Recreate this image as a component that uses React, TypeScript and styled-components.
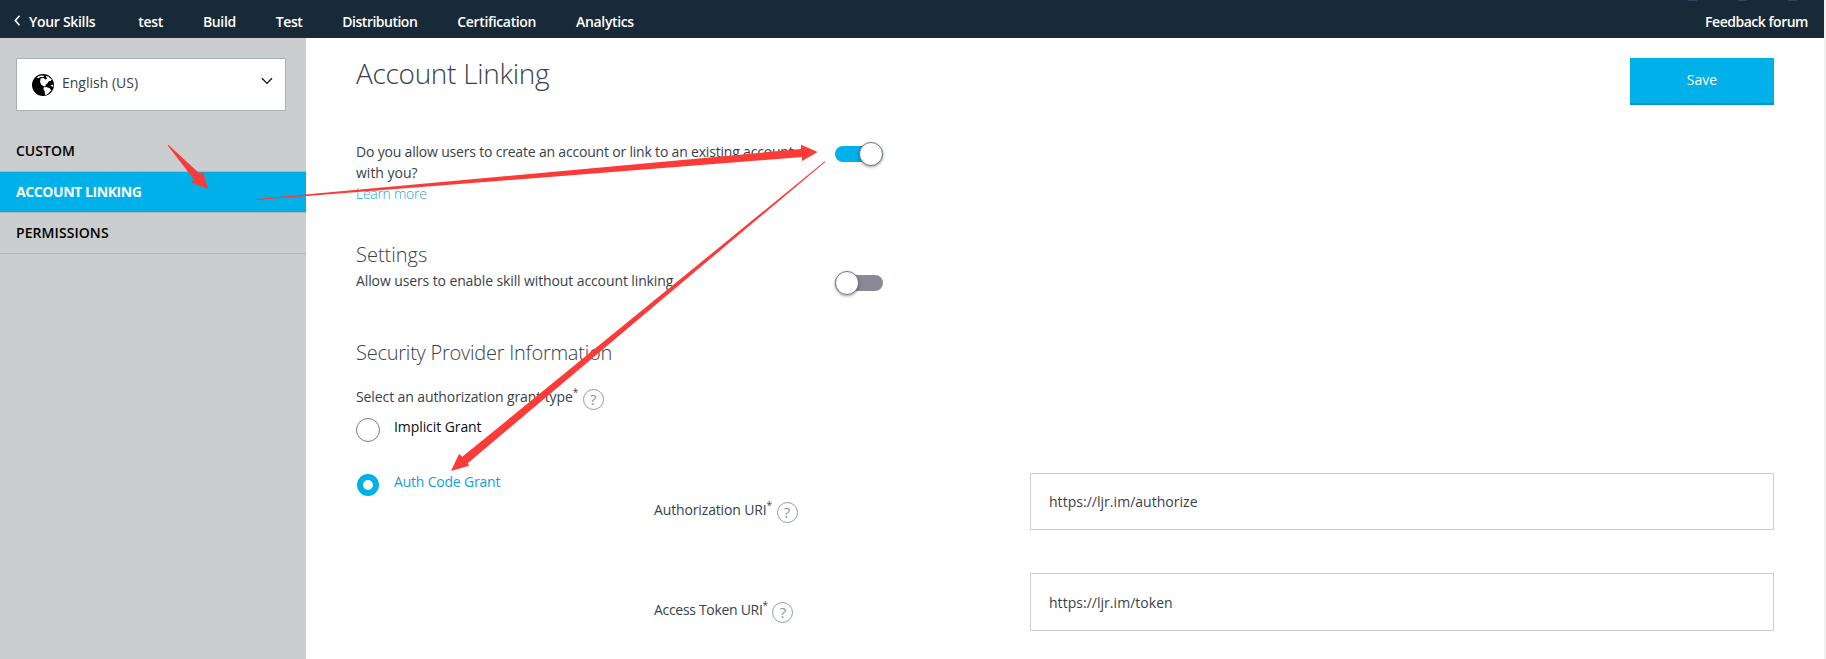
import React from 'react';
import styled, { createGlobalStyle, css } from 'styled-components';

const GlobalStyle = createGlobalStyle`
  * { box-sizing: border-box; }
  body {
    margin: 0;
    overflow: hidden;
    font-family: 'Open Sans', 'Noto Sans', sans-serif;
    font-size: 14px;
    line-height: 21px;
    color: #37424a;
    background: #fff;
  }
`;

const blue = '#00b0e8';

type Spaced = { $track?: number };
const tracking = css<Spaced>`
  letter-spacing: ${({ $track = 0 }) => $track}px;
  white-space: nowrap;
`;

const Page = styled.div`
  position: relative;
  display: flex;
  flex-direction: column;
  height: 659px;
  border-right: 2px solid #f0f0f0;
`;

const TopBar = styled.header`
  position: relative;
  display: flex;
  flex: none;
  align-items: center;
  gap: 40px;
  height: 38px;
  padding: 4px 16px 0 14px;
  background: #182a38;
  color: #fff;
  font-weight: 600;
`;

const BackLink = styled.a`
  display: flex;
  align-items: center;
  gap: 8px;
  margin-right: 3px;
`;

const BackChevron = styled.svg`
  width: 7px;
  height: 11px;
  margin-bottom: 1px;
`;

const NavLink = styled.a<Spaced & { $end?: boolean }>`
  ${tracking}
  margin-left: ${({ $end }) => ($end ? 'auto' : '0')};
`;

const HeaderDots = styled.svg`
  position: absolute;
  top: 0;
  right: 26px;
  width: 112px;
  height: 2px;
`;

const Body = styled.div`
  display: flex;
  flex: 1;
  min-height: 0;
`;

const Sidebar = styled.aside`
  flex: none;
  width: 306px;
  padding-top: 20px;
  background: #cacece;
`;

const LanguageSelect = styled.div`
  display: flex;
  align-items: center;
  width: 270px;
  height: 53px;
  margin: 0 0 20px 16px;
  padding: 0 12px 0 15px;
  background: #fff;
  border: 1px solid #a5b3b3;
`;

const Globe = styled.svg`
  width: 22px;
  height: 22px;
  margin-right: 8px;
`;

const LanguageName = styled.span<Spaced>`
  ${tracking}
  flex: 1;
  padding-bottom: 4px;
`;

const DownChevron = styled.svg`
  width: 12px;
  height: 8px;
  margin-bottom: 8px;
`;

const SideItem = styled.a<Spaced & { $active?: boolean }>`
  ${tracking}
  display: flex;
  align-items: center;
  height: 41px;
  padding: 0 0 1px 16px;
  border-bottom: 1px solid #b0b6b8;
  font-weight: ${({ $active }) => ($active ? 700 : 600)};
  color: ${({ $active }) => ($active ? '#fff' : '#000')};
  background: ${({ $active }) => ($active ? blue : 'transparent')};
`;

const Main = styled.main`
  flex: 1;
  padding: 15px 50px 0;
`;

const TitleRow = styled.div`
  display: flex;
  justify-content: space-between;
  margin-bottom: 36px;
`;

const Title = styled.h1<Spaced>`
  ${tracking}
  margin: 0;
  font-size: 28px;
  line-height: 40px;
  font-weight: 300;
`;

const SaveButton = styled.button`
  width: 144px;
  height: 47px;
  margin-top: 5px;
  padding: 0 0 2px;
  border: 0;
  border-bottom: 2px solid #0097c6;
  background: ${blue};
  color: #fff;
  font: inherit;
`;

const SettingRow = styled.div<{ $after: number }>`
  display: grid;
  grid-template-columns: 479px auto;
  justify-content: start;
  margin-bottom: ${({ $after }) => $after}px;
`;

const Line = styled.div<Spaced>`
  ${tracking}
`;

const LearnMore = styled.a<Spaced>`
  ${tracking}
  display: block;
  font-weight: 300;
  color: #2ea3dc;
`;

const Switch = styled.span<{ $on?: boolean }>`
  display: flex;
  align-items: center;
  justify-content: ${({ $on }) => ($on ? 'flex-end' : 'flex-start')};
  width: 48px;
  height: 16px;
  margin: 5px 0 4px;
  border-radius: 8px;
  background: ${({ $on }) => ($on ? blue : '#8b8998')};
`;

const Knob = styled.span`
  flex: none;
  width: 24px;
  height: 24px;
  border: 1px solid #77768a;
  border-radius: 50%;
  background: #fff;
  box-shadow: 0 1px 3px rgba(0, 0, 0, 0.4);
`;

const Heading = styled.h2<Spaced & { $after: number }>`
  ${tracking}
  margin: 0 0 ${({ $after }) => $after}px;
  font-size: 20px;
  line-height: 28px;
  font-weight: 300;
`;

const LabelRow = styled.div<Spaced>`
  ${tracking}
  display: flex;
  align-items: flex-start;
`;

const Star = styled.sup`
  width: 5px;
  font-size: 10px;
  line-height: 12px;
  letter-spacing: 0;
`;

const HelpBadge = styled.span`
  display: flex;
  align-items: center;
  justify-content: center;
  width: 21px;
  height: 21px;
  margin: 3px 0 0 5px;
  border: 1px solid #8f9c9c;
  border-radius: 50%;
  color: #8a9898;
  font-size: 15px;
  letter-spacing: 0;
`;

const RadioRow = styled.label<{ $checked?: boolean }>`
  display: flex;
  gap: 14px;
  color: ${({ $checked }) => ($checked ? '#109fd9' : '#0c0c18')};
`;

const Radio = styled.span<{ $checked?: boolean }>`
  width: ${({ $checked }) => ($checked ? 22 : 24)}px;
  height: ${({ $checked }) => ($checked ? 22 : 24)}px;
  margin: ${({ $checked }) => ($checked ? '3px 1px 0' : '2px 0 0')};
  border: ${({ $checked }) => ($checked ? `6px solid ${blue}` : '1px solid #7b7a88')};
  border-radius: 50%;
  background: #fff;
`;

const GrantOptions = styled.div`
  display: grid;
  row-gap: 29px;
  padding-top: 6px;
`;

const GrantDetail = styled.div`
  display: grid;
  grid-template-columns: 297px 1fr;
`;

const Fields = styled.div`
  display: flex;
  flex-direction: column;
  gap: 43px;
  padding-top: 2px;
`;

const FieldRow = styled.div`
  display: grid;
  grid-template-columns: 377px 1fr;
`;

const FieldLabel = styled(LabelRow)`
  padding: 26px 0 0 1px;
`;

const FieldBox = styled.div<Spaced & { $height: number }>`
  ${tracking}
  display: flex;
  align-items: center;
  height: ${({ $height }) => $height}px;
  padding-left: 18px;
  border: 1px solid #cecfd6;
  background: #fff;
`;

const Arrows = styled.svg`
  position: absolute;
  inset: 0;
  width: 1826px;
  height: 659px;
  pointer-events: none;
`;

const fields = [
  { label: 'Authorization URI', track: -0.14, value: 'https://ljr.im/authorize', height: 57 },
  { label: 'Access Token URI', track: -0.31, value: 'https://ljr.im/token', height: 58 },
];

export default function App() {
  return (
    <Page>
      <GlobalStyle />
      <TopBar>
        <BackLink>
          <BackChevron viewBox="0 0 7 11">
            <path d="M5.5 0.8 1.3 5.5l4.2 4.7" fill="none" stroke="#fff" strokeWidth="1.6" />
          </BackChevron>
          <NavLink $track={-0.3}>Your Skills</NavLink>
        </BackLink>
        <NavLink $track={-0.35}>test</NavLink>
        <NavLink $track={-0.35}>Build</NavLink>
        <NavLink $track={-0.45}>Test</NavLink>
        <NavLink $track={-0.5}>Distribution</NavLink>
        <NavLink $track={-0.35}>Certification</NavLink>
        <NavLink $track={-0.35}>Analytics</NavLink>
        <NavLink $track={-0.48} $end>Feedback forum</NavLink>
        <HeaderDots viewBox="0 0 112 2">
          <path d="M2 0h9M52 0h9M102 0h9" stroke="#38506e" strokeWidth="1.6" />
        </HeaderDots>
      </TopBar>
      <Body>
        <Sidebar>
          <LanguageSelect>
            <Globe viewBox="0 0 22 22">
              <circle cx="11" cy="11" r="11" fill="#000" />
              <path
                d="M4.5 3.2 8.5 1.5l4 .3-1.4 1.4-2.6-.3-2.2 1.3z"
                fill="#fff"
              />
              <path
                d="M8.2 4.4l3.4-.4 1.8 1.6 1.6-1.2-1.4-2.4 2.8.4 3.4 3.1-1 1.6-2 .2-1.7 2.5-1.6 1 .3 1.2-1.7.5-2.6-1.5-1.5-3 .5-2.4z"
                fill="#fff"
              />
              <path
                d="M11.8 13.2l2.6-.3 3.3 1.3 1.6 2-1.3 1.6-1.9 2-1.9 1.2-1.3-.4-.2-3.4-1.3-2z"
                fill="#fff"
              />
              <path d="M18.4 11.4l2.8-1v2.6z" fill="#fff" />
            </Globe>
            <LanguageName>English (US)</LanguageName>
            <DownChevron viewBox="0 0 12 8">
              <path d="M1 1.2 6 6.4l5-5.2" fill="none" stroke="#111" strokeWidth="1.3" />
            </DownChevron>
          </LanguageSelect>
          <SideItem>CUSTOM</SideItem>
          <SideItem $active $track={-0.42}>ACCOUNT LINKING</SideItem>
          <SideItem $track={0.07}>PERMISSIONS</SideItem>
        </Sidebar>
        <Main>
          <TitleRow>
            <Title $track={-0.3}>Account Linking</Title>
            <SaveButton>Save</SaveButton>
          </TitleRow>
          <SettingRow $after={37}>
            <div>
              <Line $track={-0.19}>Do you allow users to create an account or link to an existing account</Line>
              <Line>with you?</Line>
              <LearnMore $track={-0.28}>Learn more</LearnMore>
            </div>
            <Switch $on>
              <Knob />
            </Switch>
          </SettingRow>
          <Heading $after={1}>Settings</Heading>
          <SettingRow $after={44}>
            <Line $track={-0.11}>Allow users to enable skill without account linking</Line>
            <Switch>
              <Knob />
            </Switch>
          </SettingRow>
          <Heading $after={19} $track={-0.23}>Security Provider Information</Heading>
          <LabelRow $track={-0.1}>
            Select an authorization grant type
            <Star>*</Star>
            <HelpBadge>?</HelpBadge>
          </LabelRow>
          <GrantOptions>
            <RadioRow>
              <Radio />
              <Line $track={-0.08}>Implicit Grant</Line>
            </RadioRow>
            <GrantDetail>
              <RadioRow $checked>
                <Radio $checked />
                <Line $track={-0.2}>Auth Code Grant</Line>
              </RadioRow>
              <Fields>
                {fields.map((f) => (
                  <FieldRow key={f.label}>
                    <FieldLabel $track={f.track}>
                      {f.label}
                      <Star>*</Star>
                      <HelpBadge>?</HelpBadge>
                    </FieldLabel>
                    <FieldBox $height={f.height} $track={0.03}>{f.value}</FieldBox>
                  </FieldRow>
                ))}
              </Fields>
            </GrantDetail>
          </GrantOptions>
        </Main>
      </Body>
      <Arrows viewBox="0 0 1826 659">
        <g fill="#fc3a38">
          <path d="M168.3 144.8 199.5 173.5 203 172 208 189 191.5 182.5 194 179.5 167.7 145.4z" />
          <path d="M256 199 801 149V144.7L817.7 152 802 161V157L256 200z" />
          <path d="M825.3 161.9 467.7 463.2 469 465.7 451 471 459 454 462.3 456.8 824.8 161.3z" />
        </g>
      </Arrows>
    </Page>
  );
}
